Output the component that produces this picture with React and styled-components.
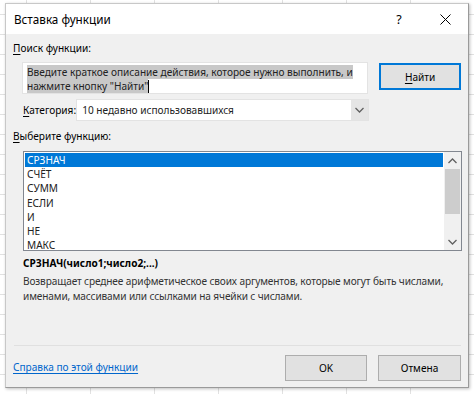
import React from "react";
import styled, { createGlobalStyle } from "styled-components";

const GlobalStyle = createGlobalStyle`
  html, body {
    margin: 0;
    padding: 0;
  }
  body {
    width: 474px;
    height: 394px;
    overflow: hidden;
    font-family: "Noto Sans", "Open Sans", sans-serif;
    font-size: 10.1px;
    color: #000;
    background-color: #fff;
    background-image:
      linear-gradient(to right, #e1e1e1 1px, transparent 1px),
      linear-gradient(to bottom, #e1e1e1 1px, transparent 1px);
    background-size: 64px 20px;
    background-position: 26px 14px;
  }
`;

const Page = styled.div`
  padding: 3px 5px 0 5px;
`;

const Dialog = styled.div`
  width: 464px;
  height: 385px;
  box-sizing: border-box;
  border: 1px solid #9a9a9a;
  border-top-color: #c8c8c8;
  border-left-color: #c8c8c8;
  box-shadow: 1px 1px 3px rgba(0, 0, 0, 0.25);
  background: #f0f0f0;
  display: flex;
  flex-direction: column;
`;

const TitleBar = styled.div`
  height: 30px;
  background: #fff;
  display: flex;
  align-items: center;
  padding-left: 8px;
`;

const Title = styled.div`
  flex: 1;
  font-size: 11.7px;
  color: #000;
`;

const CaptionButton = styled.div`
  width: 46px;
  height: 30px;
  display: flex;
  align-items: center;
  justify-content: center;
  font-size: 12.5px;
  color: #000;
`;

const Body = styled.div`
  flex: 1;
  display: flex;
  flex-direction: column;
  padding: 7px 7px 6px 7px;
`;

const Label = styled.div`
  line-height: 15px;
  color: #000;
`;

const Ul = styled.span`
  text-decoration: underline;
  text-underline-offset: 2px;
`;

const SearchRow = styled.div`
  display: flex;
  align-items: flex-start;
  gap: 11px;
  margin-top: 6px;
  padding-left: 9px;
`;

const TextArea = styled.div`
  width: 347px;
  height: 32px;
  box-sizing: border-box;
  background: #fff;
  border: 1px solid #e3e3e3;
  padding: 2px 4px;
  line-height: 14px;
  color: #222;
`;

const Selected = styled.span`
  background: #c8c8c8;
`;

const Caret = styled.span`
  display: inline-block;
  width: 1px;
  height: 13px;
  background: #000;
  vertical-align: -3px;
`;

const Button = styled.div`
  width: ${(p) => p.$w || 82}px;
  height: ${(p) => p.$h || 26}px;
  box-sizing: border-box;
  background: #e1e1e1;
  border: ${(p) => (p.$default ? "2px solid #0078d7" : "1px solid #adadad")};
  display: flex;
  align-items: center;
  justify-content: center;
  color: #000;
  margin-top: ${(p) => p.$mt || 0}px;
`;

const CategoryRow = styled.div`
  width: 346px;
  display: flex;
  align-items: center;
  margin-top: 5px;
  padding-left: 10px;
`;

const Select = styled.div`
  width: 293px;
  height: 22px;
  margin-left: auto;
  box-sizing: border-box;
  background: #fff;
  border: 1px solid #e3e3e3;
  display: flex;
  align-items: center;
`;

const SelectValue = styled.div`
  flex: 1;
  padding-left: 5px;
  color: #222;
`;

const SelectArrow = styled.div`
  width: 17px;
  height: 100%;
  background: #e5e5e5;
  display: flex;
  align-items: center;
  justify-content: center;
`;

const ListBox = styled.div`
  margin: 7px 0 0 10px;
  width: 439px;
  height: 100px;
  box-sizing: border-box;
  background: #fff;
  border: 1px solid #828790;
  display: flex;
`;

const Items = styled.div`
  flex: 1;
  padding: 1px 1px 0 1px;
`;

const Item = styled.div`
  height: 14.2px;
  line-height: 14px;
  padding-left: 2px;
  background: ${(p) => (p.$active ? "#0078d7" : "transparent")};
  color: ${(p) => (p.$active ? "#fff" : "#222")};
`;

const ScrollBar = styled.div`
  width: 17px;
  background: #f0f0f0;
  display: flex;
  flex-direction: column;
  align-items: stretch;
`;

const ScrollArrow = styled.div`
  height: 17px;
  display: flex;
  align-items: center;
  justify-content: center;
`;

const ScrollTrack = styled.div`
  flex: 1;
`;

const Thumb = styled.div`
  height: 45px;
  margin: 0 1px;
  background: #cdcdcd;
`;

const Syntax = styled.div`
  font-weight: bold;
  margin: 5px 0 0 10px;
  line-height: 15px;
  color: #000;
`;

const Description = styled.div`
  margin: 3px 0 0 10px;
  line-height: 15px;
  color: #333;
  width: 442px;
  letter-spacing: -0.12px;
`;

const Spacer = styled.div`
  flex: 1;
`;

const Separator = styled.div`
  height: 1px;
  background: #e0e0e0;
  margin: 0 0 9px 1px;
`;

const Footer = styled.div`
  display: flex;
  align-items: center;
  gap: 11px;
`;

const HelpLink = styled.a`
  flex: 1;
  color: #0066cc;
  text-decoration: underline;
  text-underline-offset: 2px;
  margin-top: -2px;
`;

const Chevron = ({ dir = "down", color = "#606060" }) => (
  <svg width="9" height="6" viewBox="0 0 9 6">
    <path
      d={dir === "down" ? "M0.5 1 L4.5 5 L8.5 1" : "M0.5 5 L4.5 1 L8.5 5"}
      fill="none"
      stroke={color}
      strokeWidth="1.3"
    />
  </svg>
);

const functions = ["СРЗНАЧ", "СЧЁТ", "СУММ", "ЕСЛИ", "И", "НЕ", "МАКС"];

export default function App() {
  return (
    <>
      <GlobalStyle />
      <Page>
        <Dialog>
          <TitleBar>
            <Title>Вставка функции</Title>
            <CaptionButton>?</CaptionButton>
            <CaptionButton>
              <svg width="11" height="11" viewBox="0 0 11 11">
                <path d="M0.5 0.5 L10.5 10.5 M10.5 0.5 L0.5 10.5" stroke="#000" strokeWidth="1" />
              </svg>
            </CaptionButton>
          </TitleBar>
          <Body>
            <Label>
              <Ul>П</Ul>оиск функции:
            </Label>
            <SearchRow>
              <TextArea>
                <Selected>
                  Введите краткое описание действия, которое нужно выполнить, и
                  нажмите кнопку "Найти"
                </Selected>
                <Caret />
              </TextArea>
              <Button $default $w={82} $h={27} $mt={1}>
                <Ul>Н</Ul>айти
              </Button>
            </SearchRow>
            <CategoryRow>
              <Label>
                <Ul>К</Ul>атегория:
              </Label>
              <Select>
                <SelectValue>10 недавно использовавшихся</SelectValue>
                <SelectArrow>
                  <Chevron />
                </SelectArrow>
              </Select>
            </CategoryRow>
            <Label style={{ marginTop: 8 }}>
              <Ul>В</Ul>ыберите функцию:
            </Label>
            <ListBox>
              <Items>
                {functions.map((f, i) => (
                  <Item key={f} $active={i === 0}>
                    {f}
                  </Item>
                ))}
              </Items>
              <ScrollBar>
                <ScrollArrow>
                  <Chevron dir="up" />
                </ScrollArrow>
                <ScrollTrack>
                  <Thumb />
                </ScrollTrack>
                <ScrollArrow>
                  <Chevron dir="down" />
                </ScrollArrow>
              </ScrollBar>
            </ListBox>
            <Syntax>СРЗНАЧ(число1;число2;...)</Syntax>
            <Description>
              Возвращает среднее арифметическое своих аргументов, которые могут быть числами,
              именами, массивами или ссылками на ячейки с числами.
            </Description>
            <Spacer />
            <Separator />
            <Footer>
              <HelpLink>Справка по этой функции</HelpLink>
              <Button $w={82}>OK</Button>
              <Button $w={83}>Отмена</Button>
            </Footer>
          </Body>
        </Dialog>
      </Page>
    </>
  );
}
